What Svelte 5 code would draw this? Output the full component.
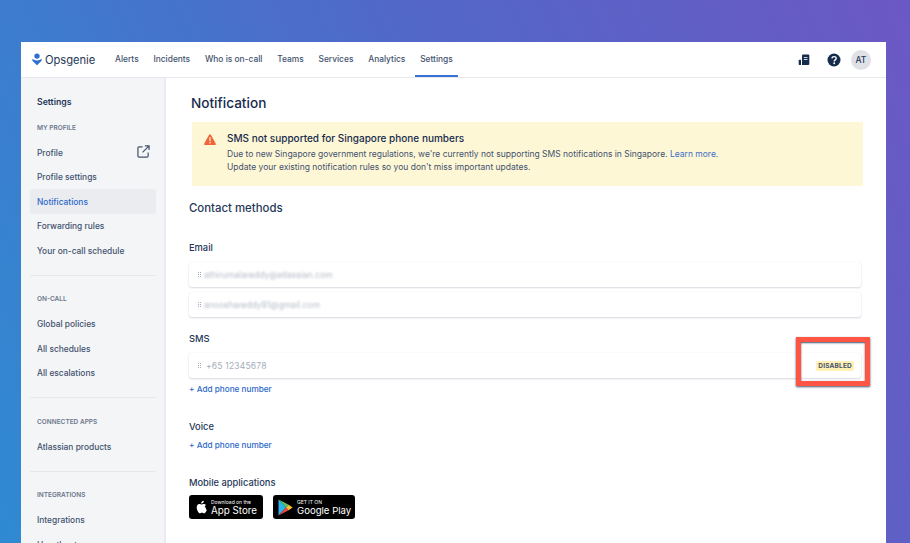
<script>
  const nav = ['Alerts', 'Incidents', 'Who is on-call', 'Teams', 'Services', 'Analytics', 'Settings'];
  const groups = [
    { title: 'MY PROFILE', items: ['Profile', 'Profile settings', 'Notifications', 'Forwarding rules', 'Your on-call schedule'] },
    { title: 'ON-CALL', items: ['Global policies', 'All schedules', 'All escalations'] },
    { title: 'CONNECTED APPS', items: ['Atlassian products'] },
    { title: 'INTEGRATIONS', items: ['Integrations', 'Heartbeats'] }
  ];
</script>

<div class="page">
  <div class="window">
    <header class="topbar">
      <div class="logo">
        <svg width="10" height="13" viewBox="0 0 11 15" aria-hidden="true">
          <circle cx="5.500" cy="3.600" r="3.100" fill="#2f6fd0" />
          <path d="M0.400 6.600c1.400 1.200 3 2 5.100 2s3.700-.8 5.100-2c.5 1.200.3 2.400-.6 3.200L5.500 14 1 9.800C.1 9 -.1 7.800.4 6.600z" fill="#2f6fd0" />
        </svg>
        <span>Opsgenie</span>
      </div>
      <nav class="nav">
        {#each nav as item}
          <span class="navitem" class:current={item === 'Settings'}>{item}</span>
        {/each}
      </nav>
      <div class="tools">
        <svg width="12" height="12" viewBox="0 0 12 12" aria-hidden="true">
          <path d="M4 1.500c0-.5.4-.9.9-.9h5.500c.5 0 .9.4.9.9v8.600c0 .5-.4.900-.9.900H4z" fill="#172b4d" />
          <path d="M.7 6.500c0-.4.3-.7.7-.7H3V11H1.400c-.4 0-.7-.3-.7-.7z" fill="#172b4d" />
          <path d="M5.800 3.500h3.700M5.800 5.500h3.700" stroke="#fff" stroke-width=".8" />
        </svg>
        <svg class="help" width="14" height="14" viewBox="0 0 14 14" aria-hidden="true">
          <circle cx="7" cy="7" r="6.500" fill="#172b4d" />
          <path d="M4.900 5.400C5 4.200 5.900 3.600 7.100 3.600c1.200 0 2.100.7 2.100 1.800 0 1.500-2 1.500-2 3" fill="none" stroke="#fff" stroke-width="1.400" />
          <circle cx="7.200" cy="10.300" r=".95" fill="#fff" />
        </svg>
        <span class="avatar">AT</span>
      </div>
    </header>

    <div class="body">
      <aside class="sidebar">
        <div class="side-title">Settings</div>
        {#each groups as group, i}
          {#if i > 0}<div class="sep"></div>{/if}
          <div class="group-title">{group.title}</div>
          {#each group.items as item}
            <div class="side-item" class:active={item === 'Notifications'}>
              <span>{item}</span>
              {#if item === 'Profile'}
                <svg width="13" height="13" viewBox="0 0 14 14" aria-hidden="true">
                  <path d="M6 2H2.200C1.500 2 1 2.500 1 3.200v8.600c0 .7.500 1.200 1.200 1.200h8.600c.7 0 1.200-.5 1.200-1.200V8" fill="none" stroke="#42526e" stroke-width="1.300" />
                  <path d="M6 8l7-7M8.500 1H13v4.500" fill="none" stroke="#42526e" stroke-width="1.300" />
                </svg>
              {/if}
            </div>
          {/each}
        {/each}
      </aside>

      <main class="main">
        <h1>Notification</h1>

        <section class="banner">
          <svg width="12" height="11" viewBox="0 0 12 11" aria-hidden="true">
            <path d="M5.100.8c.4-.7 1.400-.7 1.800 0l4.800 8.600c.4.700-.1 1.500-.9 1.500H1.200c-.8 0-1.300-.8-.9-1.500z" fill="#f0643a" />
            <rect x="5.300" y="3.200" width="1.400" height="4" fill="#fde4c8" />
            <rect x="5.300" y="8" width="1.400" height="1.400" fill="#fde4c8" />
          </svg>
          <div class="banner-text">
            <h3>SMS not supported for Singapore phone numbers</h3>
            <p>Due to new Singapore government regulations, we're currently not supporting SMS notifications in Singapore. <a href="#top">Learn more.</a></p>
            <p>Update your existing notification rules so you don't miss important updates.</p>
          </div>
        </section>

        <h2>Contact methods</h2>

        <div class="label email-label">Email</div>
        <div class="card"><i class="grip"></i><span class="blurred">athirumalareddy@atlassian.com</span></div>
        <div class="card second"><i class="grip"></i><span class="blurred">anooshareddy91@gmail.com</span></div>

        <div class="label sms-label">SMS</div>
        <div class="card"><i class="grip"></i><span class="phone">+65 12345678</span><span class="lozenge">DISABLED</span></div>
        <a class="add" href="#top">+ Add phone number</a>

        <div class="label voice-label">Voice</div>
        <a class="add voice-add" href="#top">+ Add phone number</a>

        <div class="label mobile-label">Mobile applications</div>
        <div class="stores">
          <div class="store apple">
            <svg width="12" height="14" viewBox="0 0 14 16" aria-hidden="true">
              <path d="M11.400 8.400c0-1.700 1.400-2.500 1.500-2.600-.8-1.200-2.100-1.300-2.500-1.400-1.100-.1-2.100.6-2.600.6-.6 0-1.400-.6-2.300-.6C4.300 4.400 3.200 5 2.600 6.100c-1.300 2.200-.3 5.500.9 7.300.6.900 1.300 1.900 2.300 1.800.9 0 1.300-.6 2.400-.6s1.400.6 2.400.6 1.600-.9 2.200-1.800c.7-1 1-2 1-2.100-.1 0-1.400-.6-1.400-2.900zM9.500 3c.5-.6.900-1.500.8-2.400-.8 0-1.700.5-2.300 1.100-.5.6-.9 1.500-.8 2.300.9.100 1.800-.4 2.300-1z" fill="#fff" />
            </svg>
            <div class="store-text">
              <small>Download on the</small>
              <b>App Store</b>
            </div>
          </div>
          <div class="store play">
            <svg width="15" height="17" viewBox="0 0 15 17" aria-hidden="true">
              <path d="M.5.600v15.800L8 8.500z" fill="#2fb4e9" />
              <path d="M.5.600 8 8.500l2.600-2.700z" fill="#5fc46e" />
              <path d="M.5 16.400 8 8.500l2.600 2.700z" fill="#ea4a46" />
              <path d="M10.600 5.800 8 8.500l2.600 2.700 4-2.700z" fill="#f8c32c" />
            </svg>
            <div class="store-text">
              <small>GET IT ON</small>
              <b>Google Play</b>
            </div>
          </div>
        </div>
      </main>
    </div>
  </div>
  <div class="callout"></div>
</div>

<style>
  :global(body) {
    margin: 0;
  }
  .page {
    position: relative;
    box-sizing: border-box;
    width: 910px;
    height: 543px;
    overflow: hidden;
    padding: 42px 24px 0 21px;
    background: linear-gradient(245deg, #6c58c4 0%, #5168c8 45%, #2f8ad2 100%);
    font-family: Inter, "Liberation Sans", sans-serif;
    color: #172b4d;
  }
  .window {
    background: #fff;
    height: 501px;
    overflow: hidden;
    display: flex;
    flex-direction: column;
  }
  .topbar {
    height: 35px;
    flex: none;
    display: flex;
    align-items: center;
    padding-left: 11px;
    padding-right: 15px;
    border-bottom: 1px solid #e6e8ee;
  }
  .logo {
    display: flex;
    align-items: center;
    gap: 3px;
    width: 83px;
    font-size: 11.200px;
    letter-spacing: -.05px;
    color: #253858;
  }
  .logo svg {
    margin-bottom: 1px;
  }
  .nav {
    display: flex;
    gap: 14.800px;
    align-self: stretch;
  }
  .navitem {
    font-size: 8.400px;
    font-weight: 500;
    color: #42526e;
    display: flex;
    align-items: center;
    height: 35px;
    box-sizing: border-box;
    padding-bottom: 1px;
  }
  .navitem.current {
    position: relative;
  }
  .navitem.current::after {
    content: "";
    position: absolute;
    left: -5px;
    right: -5px;
    bottom: 0;
    height: 2px;
    background: #3b73d3;
  }
  .tools {
    margin-left: auto;
    display: flex;
    align-items: center;
  }
  .help {
    margin-left: 17px;
  }
  .avatar {
    margin-left: 10px;
    width: 20px;
    height: 20px;
    border-radius: 50%;
    background: #dfe1e6;
    font-size: 8.500px;
    font-weight: 500;
    color: #253858;
    display: flex;
    align-items: center;
    justify-content: center;
  }
  .body {
    flex: 1;
    display: flex;
    min-height: 0;
  }
  .sidebar {
    width: 145px;
    flex: none;
    box-sizing: border-box;
    background: #f4f5f7;
    border-right: 2px solid #e9ebf0;
    padding: 13px 8px 0 9px;
  }
  .side-title {
    height: 24.500px;
    line-height: 23px;
    padding-left: 7px;
    font-size: 8.700px;
    font-weight: 600;
    color: #253858;
  }
  .group-title {
    height: 24.500px;
    line-height: 24px;
    padding-left: 7px;
    font-size: 6.500px;
    font-weight: 600;
    color: #6b778c;
  }
  .side-item {
    height: 24.500px;
    padding: 1px 7px 0;
    box-sizing: border-box;
    display: flex;
    align-items: center;
    justify-content: space-between;
    font-size: 8.400px;
    font-weight: 500;
    color: #42526e;
  }
  .side-item svg {
    margin-right: -1px;
    margin-top: -2px;
  }
  .side-item.active {
    background: #ebecf0;
    color: #2d68c8;
    border-radius: 2px;
  }
  .sep {
    height: 1px;
    background: #e6e8ec;
    margin: 12px 0 11.500px;
  }
  .main {
    flex: 1;
    min-width: 0;
    padding-left: 23px;
    padding-right: 25px;
    overflow: hidden;
  }
  h1 {
    margin: 15px 0 0 2px;
    height: 20px;
    line-height: 20px;
    font-size: 13.600px;
    font-weight: 500;
    color: #172b4d;
  }
  .banner {
    margin: 9px -2px 0 3px;
    height: 64px;
    box-sizing: border-box;
    background: #fef7d6;
    display: flex;
    padding: 10px 0 0 12px;
    gap: 11px;
  }
  .banner svg {
    margin-top: 2px;
    flex: none;
  }
  .banner-text h3 {
    margin: 0 0 4px;
    font-size: 10px;
    line-height: 12px;
    font-weight: 500;
    color: #172b4d;
  }
  .banner-text p {
    margin: 0;
    font-size: 8.500px;
    line-height: 12.500px;
    color: #42526e;
    white-space: nowrap;
  }
  .banner-text a {
    color: #3b6fc9;
    text-decoration: none;
  }
  h2 {
    margin: 15px 0 0;
    height: 14px;
    line-height: 14px;
    font-size: 11.400px;
    font-weight: 500;
    color: #253858;
  }
  .label {
    font-size: 9.300px;
    font-weight: 500;
    color: #253858;
    height: 12px;
    line-height: 12px;
  }
  .email-label {
    margin-top: 27px;
  }
  .sms-label {
    margin-top: 16px;
  }
  .voice-label {
    margin-top: 26px;
  }
  .mobile-label {
    margin-top: 26px;
  }
  .card {
    height: 25px;
    margin-top: 8px;
    box-sizing: border-box;
    border-radius: 3px;
    background: #fff;
    box-shadow: 0 1px 2px #d5d8e0, 0 0 1px #e6e8ec;
    display: flex;
    align-items: center;
    padding-left: 9px;
    font-size: 8.500px;
    color: #a5adba;
  }
  .second {
    margin-top: 5px;
  }
  .grip {
    width: 3px;
    height: 5px;
    margin-right: 3px;
    background: repeating-linear-gradient(90deg, #a5adba 0 1px, transparent 1px 2px), repeating-linear-gradient(transparent 0 1px, #fff 1px 2px);
    background-blend-mode: screen;
    flex: none;
  }
  .blurred {
    filter: blur(1.200px);
    color: #b3bac5;
  }
  .phone {
    margin-left: 2px;
    letter-spacing: .2px;
  }
  .lozenge {
    margin-left: auto;
    margin-right: 7px;
    background: #fff0b3;
    color: #42526e;
    font-size: 6.500px;
    font-weight: 700;
    letter-spacing: .2px;
    padding: 1px 2px;
    border-radius: 2px;
  }
  .add {
    display: block;
    margin-top: 5px;
    height: 12px;
    line-height: 12px;
    font-size: 8.200px;
    font-weight: 500;
    color: #2d68c8;
    text-decoration: none;
  }
  .voice-add {
    margin-top: 6px;
  }
  .stores {
    display: flex;
    gap: 10px;
    margin-top: 6px;
  }
  .store {
    height: 24px;
    box-sizing: border-box;
    background: #000;
    border-radius: 3px;
    display: flex;
    align-items: center;
    color: #fff;
  }
  .apple {
    width: 74px;
    padding-left: 6px;
    gap: 4px;
  }
  .play {
    width: 82px;
    padding-left: 5px;
    gap: 4px;
  }
  .store-text {
    display: flex;
    flex-direction: column;
  }
  .store-text small {
    font-size: 5px;
    line-height: 6px;
    white-space: nowrap;
  }
  .store-text b {
    font-size: 9.800px;
    line-height: 11px;
    font-weight: 400;
    white-space: nowrap;
  }
  .play b {
    font-size: 9.600px;
  }
  .callout {
    position: absolute;
    left: 796px;
    top: 337px;
    width: 74px;
    height: 49px;
    box-sizing: border-box;
    border: 5px solid #ff5544;
    box-shadow: 0 1px 2px #42526e, inset 0 1px 2px #42526e;
  }
</style>
